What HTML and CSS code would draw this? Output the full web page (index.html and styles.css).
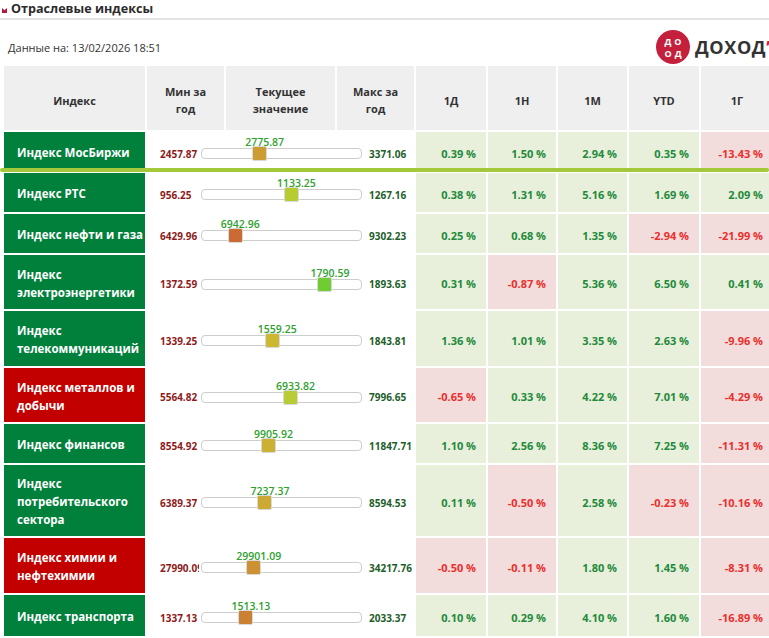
FILE: index.html
```html
<!DOCTYPE html>
<html lang="ru">
<head>
<meta charset="utf-8">
<title>Отраслевые индексы</title>
<link rel="stylesheet" href="styles.css">
</head>
<body>
<div class="page">
  <div class="title-bar">
    <svg class="title-icon" viewBox="0 0 5 5" width="5" height="5"><path d="M0 0 L2.5 2.2 L5 0 L5 5 L0 5 Z" fill="#b3173d"/></svg>
    <h1 class="title">Отраслевые индексы</h1>
  </div>
  <div class="info">
    <div class="date">Данные на: 13/02/2026 18:51</div>
    <div class="logo">
      <div class="logo-mark">
        <div class="logo-row"><span>Д</span><span>О</span></div>
        <div class="logo-row"><span>О</span><span>Д</span></div>
      </div>
      <span class="logo-text">ДОХОД<span class="logo-tick">’</span></span>
    </div>
  </div>
  <div class="table-wrap">
    <table class="idx">
      <colgroup>
        <col class="c-name"><col class="c-min"><col class="c-cur"><col class="c-max">
        <col class="c-d"><col class="c-w"><col class="c-m"><col class="c-ytd"><col class="c-y">
      </colgroup>
      <thead>
        <tr>
          <th>Индекс</th>
          <th>Мин за<br>год</th>
          <th>Текущее<br>значение</th>
          <th>Макс за<br>год</th>
          <th>1Д</th><th>1Н</th><th>1М</th><th>YTD</th><th>1Г</th>
        </tr>
      </thead>
      <tbody>
        <tr class="r1">
          <td class="name up">Индекс МосБиржи</td>
          <td class="range" colspan="3"><div class="range-row"><span class="min">2457.87</span><div class="slider" style="--p:0.348"><span class="cur">2775.87</span><span class="thumb"></span></div><span class="max">3371.06</span></div></td>
          <td class="pct pos">0.39 %</td><td class="pct pos">1.50 %</td><td class="pct pos">2.94 %</td><td class="pct pos">0.35 %</td><td class="pct neg">-13.43 %</td>
        </tr>
        <tr class="r1">
          <td class="name up">Индекс РТС</td>
          <td class="range" colspan="3"><div class="range-row"><span class="min">956.25</span><div class="slider" style="--p:0.569"><span class="cur">1133.25</span><span class="thumb"></span></div><span class="max">1267.16</span></div></td>
          <td class="pct pos">0.38 %</td><td class="pct pos">1.31 %</td><td class="pct pos">5.16 %</td><td class="pct pos">1.69 %</td><td class="pct pos">2.09 %</td>
        </tr>
        <tr class="r1">
          <td class="name up">Индекс нефти и газа</td>
          <td class="range" colspan="3"><div class="range-row"><span class="min">6429.96</span><div class="slider" style="--p:0.179"><span class="cur">6942.96</span><span class="thumb"></span></div><span class="max">9302.23</span></div></td>
          <td class="pct pos">0.25 %</td><td class="pct pos">0.68 %</td><td class="pct pos">1.35 %</td><td class="pct neg">-2.94 %</td><td class="pct neg">-21.99 %</td>
        </tr>
        <tr class="r2">
          <td class="name up">Индекс<br>электроэнергетики</td>
          <td class="range" colspan="3"><div class="range-row"><span class="min">1372.59</span><div class="slider" style="--p:0.802"><span class="cur">1790.59</span><span class="thumb"></span></div><span class="max">1893.63</span></div></td>
          <td class="pct pos">0.31 %</td><td class="pct neg">-0.87 %</td><td class="pct pos">5.36 %</td><td class="pct pos">6.50 %</td><td class="pct pos">0.41 %</td>
        </tr>
        <tr class="r2b">
          <td class="name up">Индекс<br>телекоммуникаций</td>
          <td class="range" colspan="3"><div class="range-row"><span class="min">1339.25</span><div class="slider" style="--p:0.436"><span class="cur">1559.25</span><span class="thumb"></span></div><span class="max">1843.81</span></div></td>
          <td class="pct pos">1.36 %</td><td class="pct pos">1.01 %</td><td class="pct pos">3.35 %</td><td class="pct pos">2.63 %</td><td class="pct neg">-9.96 %</td>
        </tr>
        <tr class="r2">
          <td class="name down">Индекс металлов и<br>добычи</td>
          <td class="range" colspan="3"><div class="range-row"><span class="min">5564.82</span><div class="slider" style="--p:0.563"><span class="cur">6933.82</span><span class="thumb"></span></div><span class="max">7996.65</span></div></td>
          <td class="pct neg">-0.65 %</td><td class="pct pos">0.33 %</td><td class="pct pos">4.22 %</td><td class="pct pos">7.01 %</td><td class="pct neg">-4.29 %</td>
        </tr>
        <tr class="r1">
          <td class="name up">Индекс финансов</td>
          <td class="range" colspan="3"><div class="range-row"><span class="min">8554.92</span><div class="slider" style="--p:0.410"><span class="cur">9905.92</span><span class="thumb"></span></div><span class="max">11847.71</span></div></td>
          <td class="pct pos">1.10 %</td><td class="pct pos">2.56 %</td><td class="pct pos">8.36 %</td><td class="pct pos">7.25 %</td><td class="pct neg">-11.31 %</td>
        </tr>
        <tr class="r3">
          <td class="name up">Индекс<br>потребительского<br>сектора</td>
          <td class="range" colspan="3"><div class="range-row"><span class="min">6389.37</span><div class="slider" style="--p:0.385"><span class="cur">7237.37</span><span class="thumb"></span></div><span class="max">8594.53</span></div></td>
          <td class="pct pos">0.11 %</td><td class="pct neg">-0.50 %</td><td class="pct pos">2.58 %</td><td class="pct neg">-0.23 %</td><td class="pct neg">-10.16 %</td>
        </tr>
        <tr class="r2b">
          <td class="name down">Индекс химии и<br>нефтехимии</td>
          <td class="range" colspan="3"><div class="range-row"><span class="min">27990.09</span><div class="slider" style="--p:0.307"><span class="cur">29901.09</span><span class="thumb"></span></div><span class="max">34217.76</span></div></td>
          <td class="pct neg">-0.50 %</td><td class="pct neg">-0.11 %</td><td class="pct pos">1.80 %</td><td class="pct pos">1.45 %</td><td class="pct neg">-8.31 %</td>
        </tr>
        <tr class="r1b">
          <td class="name up">Индекс транспорта</td>
          <td class="range" colspan="3"><div class="range-row"><span class="min">1337.13</span><div class="slider" style="--p:0.253"><span class="cur">1513.13</span><span class="thumb"></span></div><span class="max">2033.37</span></div></td>
          <td class="pct pos">0.10 %</td><td class="pct pos">0.29 %</td><td class="pct pos">4.10 %</td><td class="pct pos">1.60 %</td><td class="pct neg">-16.89 %</td>
        </tr>
      </tbody>
    </table>
    <div class="mark-line"></div>
  </div>
</div>
</body>
</html>
```

FILE: styles.css
```css
* { box-sizing: border-box; }

html, body {
  margin: 0;
  padding: 0;
  background: #fff;
  overflow: hidden;
}

body {
  width: 769px;
  height: 638px;
  font-family: "Open Sans", "Noto Sans", "DejaVu Sans", sans-serif;
  color: #333;
}

.page { width: 775px; }

.title-bar {
  display: flex;
  align-items: center;
  gap: 4px;
  height: 20px;
  padding-left: 2px;
  border-bottom: 2px solid #e3e3e3;
  width: 769px;
}

.title-icon { flex: none; margin-top: 3px; }

.title {
  margin: 0;
  font-size: 12.6px;
  font-weight: 700;
  color: #2b2b2b;
  line-height: 18px;
}

.info {
  display: flex;
  align-items: center;
  width: 769px;
  height: 44px;
  padding-top: 10px;
}

.date {
  flex: 1;
  padding-left: 8px;
  font-size: 11px;
  color: #333;
}

.logo {
  flex: none;
  width: 113px;
  display: flex;
  align-items: center;
  gap: 5px;
  overflow: hidden;
  white-space: nowrap;
}

.logo-mark {
  flex: none;
  width: 34px;
  height: 34px;
  border-radius: 50%;
  background: #c4203c;
  display: flex;
  flex-direction: column;
  align-items: center;
  justify-content: center;
  gap: 1px;
  color: #fff;
  font-size: 9px;
  font-weight: 700;
  line-height: 11px;
}

.logo-row {
  display: flex;
  gap: 3px;
}

.logo-text {
  font-size: 18px;
  font-weight: 700;
  color: #333;
  letter-spacing: 0.6px;
}

.logo-tick { color: #c4203c; }

.table-wrap {
  position: relative;
  margin-left: 2px;
}

.idx {
  border-collapse: separate;
  border-spacing: 2px;
  table-layout: fixed;
  width: 773px;
}

.c-name { width: 141px; }
.c-min { width: 77px; }
.c-cur { width: 109px; }
.c-max { width: 77px; }
.c-d { width: 70px; }
.c-w { width: 68px; }
.c-m { width: 69px; }
.c-ytd { width: 70px; }
.c-y { width: 72px; }

.idx th {
  height: 64px;
  padding: 4px 2px 0;
  background: #efefef;
  font-size: 11px;
  font-weight: 700;
  line-height: 17px;
  color: #333;
  text-align: center;
  vertical-align: middle;
}

.idx td { padding: 0; vertical-align: middle; }

.r1 { height: 39px; }
.r1b { height: 41px; }
.r2 { height: 54px; }
.r2b { height: 55px; }
.r3 { height: 71px; }

.idx td.name {
  padding: 3px 0 0 13px;
  color: #fff;
  font-size: 11.5px;
  font-weight: 700;
  line-height: 18px;
  white-space: nowrap;
}

.name.up { background: #00803b; }
.name.down { background: #c20000; }

.idx td.range {
  background: #fff;
  padding: 4px 0 0 13px;
}

.range-row {
  display: flex;
  align-items: center;
}

.min, .max {
  font-size: 10px;
  font-weight: 700;
  white-space: nowrap;
}

.min {
  width: 39px;
  margin-right: 2px;
  overflow: hidden;
  color: #8c1c1c;
}

.max { color: #1d5e2b; }

.slider {
  position: relative;
  flex: none;
  width: 161px;
  height: 11px;
  margin-right: 7px;
  border: 1px solid #cdcdcd;
  border-radius: 4px;
  background: #fff;
}

.thumb {
  position: absolute;
  top: 50%;
  left: calc(var(--p) * (100% - 15px));
  width: 15px;
  height: 15px;
  margin-top: -7.5px;
  border: 1px solid #d9d9d9;
  border-radius: 2px;
  background: hsl(calc(var(--p) * 120) 60% 50%);
}

.cur {
  position: absolute;
  bottom: calc(100% + 1px);
  left: calc(var(--p) * (100% - 15px) + 12.5px);
  transform: translateX(-50%);
  font-size: 10.5px;
  font-weight: 600;
  line-height: 12px;
  color: #2ea12e;
  white-space: nowrap;
}

.idx td.pct {
  padding: 3px 10px 0 0;
  text-align: right;
  font-size: 11px;
  font-weight: 700;
  white-space: nowrap;
}

.pct.pos { background: #e8f0dc; color: #1f8a3b; }
.pct.neg { background: #f3dcdc; color: #e8302e; }

.mark-line {
  position: absolute;
  top: 104px;
  left: -2px;
  width: 769px;
  height: 4px;
  border-radius: 2px;
  background: #a3c93a;
}
```
